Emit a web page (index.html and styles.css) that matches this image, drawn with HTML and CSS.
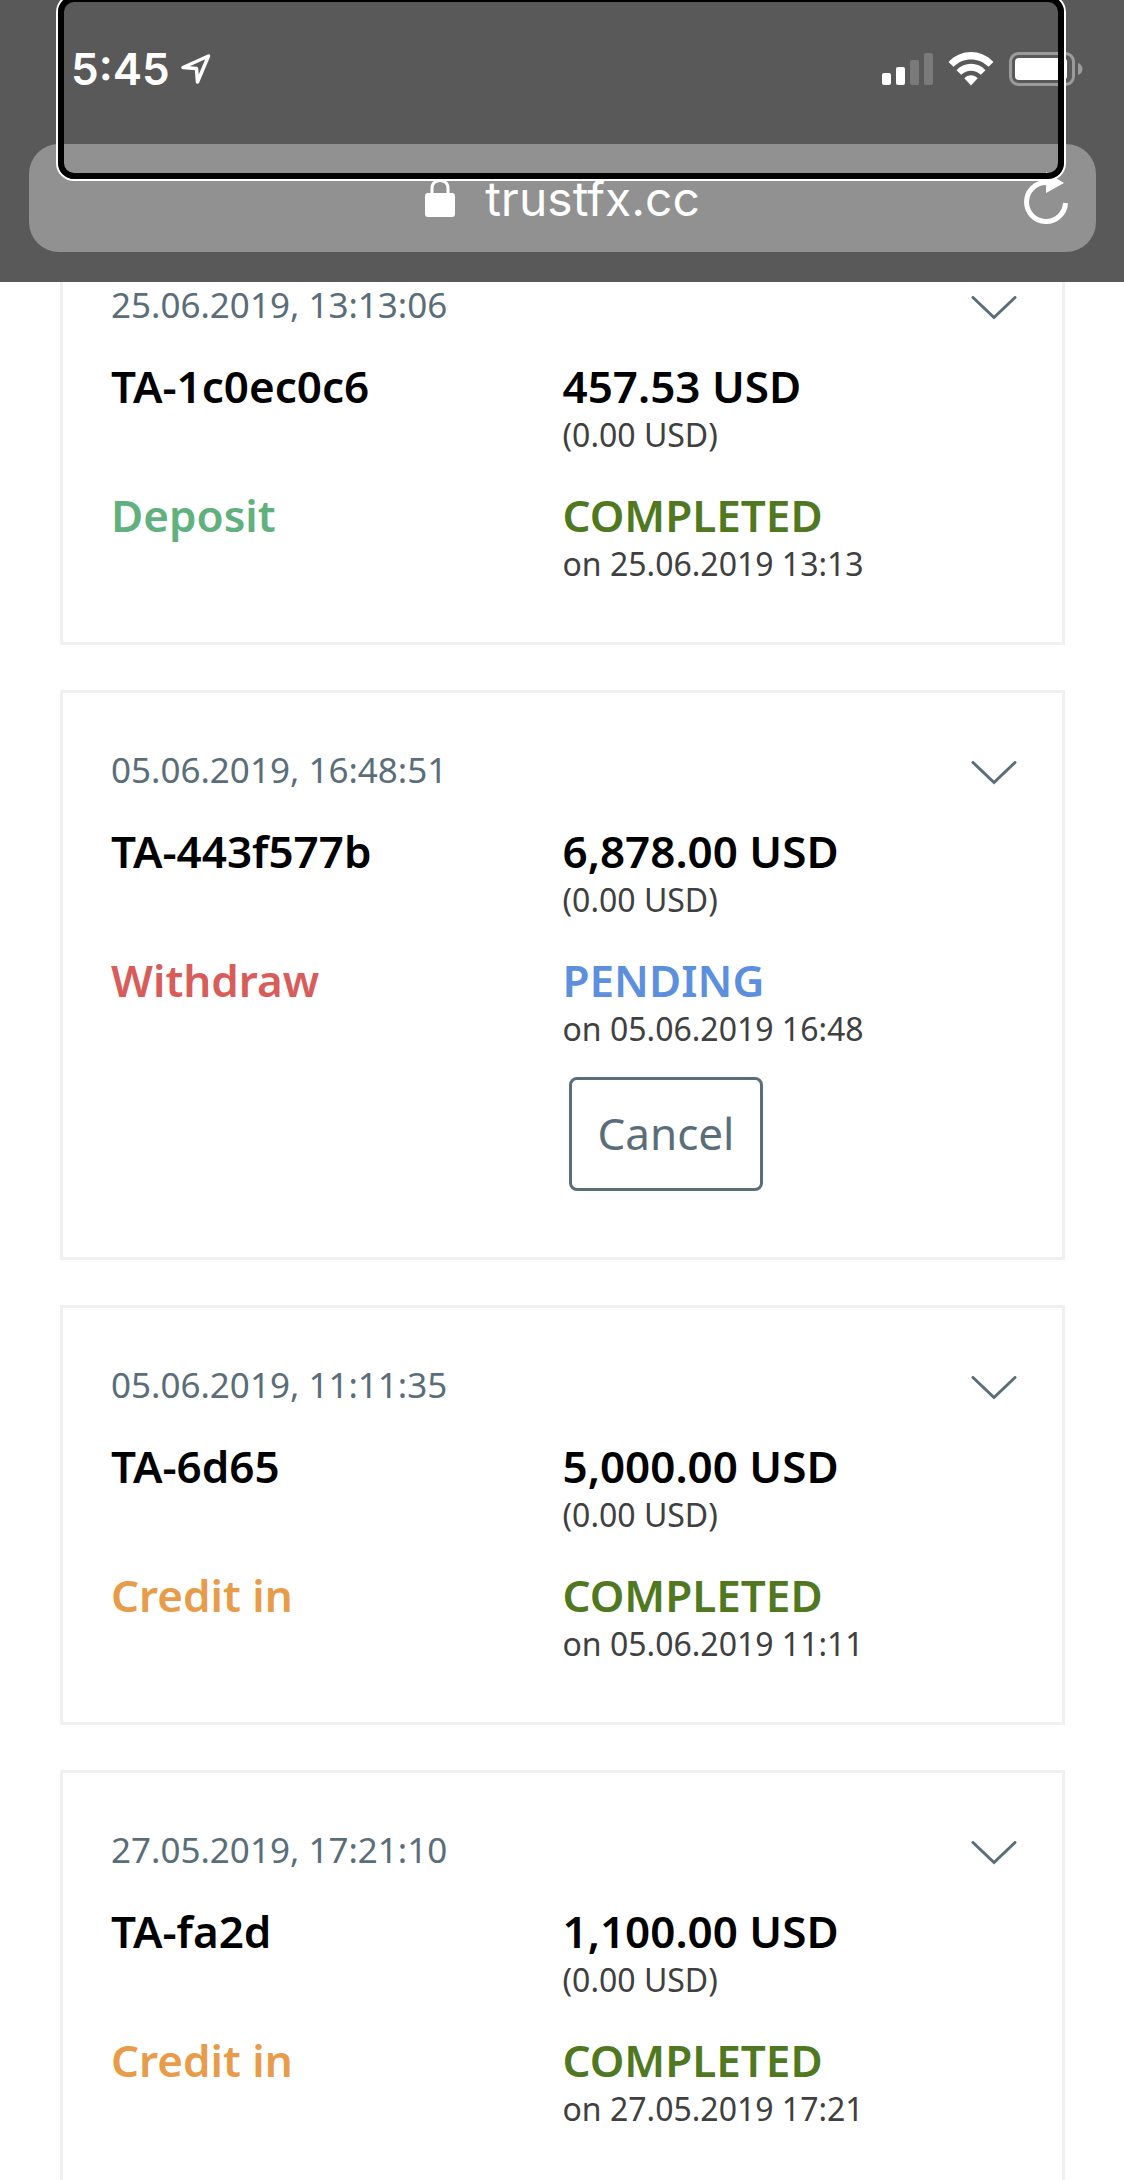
FILE: index.html
```html
<!DOCTYPE html>
<html lang="en">
<head>
  <meta charset="UTF-8">
  <meta name="viewport" content="width=device-width, initial-scale=1">
  <title>trustfx.cc</title>
  <link rel="stylesheet" href="styles.css">
</head>
<body>
  <header class="browser-bar">
    <div class="status-bar">
      <span class="time">5:45</span>
      <svg class="location" width="30" height="30" viewBox="0 0 30 30">
        <path d="M2 13.500 L27.500 2 L16.500 28 L15.500 14.500 Z" fill="none" stroke="#fff" stroke-width="3.500" stroke-linejoin="round"/>
      </svg>
      <div class="status-icons">
        <svg width="51" height="34" viewBox="0 0 51 34" fill="#fff">
          <rect x="0" y="21" width="9" height="12" rx="2"/>
          <rect x="14" y="15" width="9" height="18" rx="2"/>
          <rect x="28" y="8" width="9" height="25" rx="2" opacity=".2"/>
          <rect x="42" y="1" width="9" height="32" rx="2" opacity=".2"/>
        </svg>
        <svg width="46" height="34" viewBox="0 0 46 34" fill="#fff">
          <path d="M0.500 10 C13 -3.300 33 -3.300 45.500 10 L40.500 14.800 C31 5 15 5 5.500 14.800 Z"/>
          <path d="M8.500 18.200 C16.500 9.700 29.500 9.700 37.500 18.200 L32.800 22.800 C27 17.300 19 17.300 13.200 22.800 Z"/>
          <path d="M16.300 26.300 C20 22.300 26 22.300 29.700 26.300 L23 33.500 Z"/>
        </svg>
        <svg width="74" height="34" viewBox="0 0 74 34">
          <rect x="1.500" y="1.500" width="63" height="31" rx="8" fill="none" stroke="#9b9b9b" stroke-width="3"/>
          <rect x="6" y="6" width="52" height="22" rx="4" fill="#fff"/>
          <path d="M69 11 C75 13 75 21 69 23 Z" fill="#9b9b9b"/>
        </svg>
      </div>
    </div>
    <div class="address-bar">
      <a class="address" href="#">
        <svg width="30" height="38" viewBox="0 0 30 38">
          <path d="M7 16 V9 C7 -1 23 -1 23 9 V16" fill="none" stroke="#fff" stroke-width="3"/>
          <rect x="0" y="14" width="30" height="24" rx="3" fill="#fff"/>
        </svg>
        <span>trustfx.cc</span>
      </a>
      <button class="reload" aria-label="Reload">
        <svg width="44" height="52" viewBox="0 0 44 52">
          <path d="M41.500 31 A19.500 19.500 0 1 1 22 10.500" fill="none" stroke="#fff" stroke-width="5"/>
          <path d="M22 0 V21 L40 11 Z" fill="#fff"/>
        </svg>
      </button>
    </div>
  </header>
  <div class="focus-ring"></div>

  <main class="transactions">
    <article class="card">
      <div class="card-head">
        <time>25.06.2019, 13:13:06</time>
        <button class="toggle" aria-label="Details">
          <svg width="46" height="24" viewBox="0 0 46 24"><path d="M2 1.500 L23 21.500 L44 1.500"/></svg>
        </button>
      </div>
      <div class="card-body">
        <div class="strong">TA-1c0ec0c6</div>
        <div>
          <div class="strong">457.53 USD</div>
          <div class="note">(0.00 USD)</div>
        </div>
        <div class="strong deposit">Deposit</div>
        <div>
          <div class="strong completed">COMPLETED</div>
          <div class="note">on 25.06.2019 13:13</div>
        </div>
      </div>
    </article>

    <article class="card">
      <div class="card-head">
        <time>05.06.2019, 16:48:51</time>
        <button class="toggle" aria-label="Details">
          <svg width="46" height="24" viewBox="0 0 46 24"><path d="M2 1.500 L23 21.500 L44 1.500"/></svg>
        </button>
      </div>
      <div class="card-body">
        <div class="strong">TA-443f577b</div>
        <div>
          <div class="strong">6,878.00 USD</div>
          <div class="note">(0.00 USD)</div>
        </div>
        <div class="strong withdraw">Withdraw</div>
        <div>
          <div class="strong pending">PENDING</div>
          <div class="note">on 05.06.2019 16:48</div>
          <button class="cancel">Cancel</button>
        </div>
      </div>
    </article>

    <article class="card">
      <div class="card-head">
        <time>05.06.2019, 11:11:35</time>
        <button class="toggle" aria-label="Details">
          <svg width="46" height="24" viewBox="0 0 46 24"><path d="M2 1.500 L23 21.500 L44 1.500"/></svg>
        </button>
      </div>
      <div class="card-body">
        <div class="strong">TA-6d65</div>
        <div>
          <div class="strong">5,000.00 USD</div>
          <div class="note">(0.00 USD)</div>
        </div>
        <div class="strong credit">Credit in</div>
        <div>
          <div class="strong completed">COMPLETED</div>
          <div class="note">on 05.06.2019 11:11</div>
        </div>
      </div>
    </article>

    <article class="card">
      <div class="card-head">
        <time>27.05.2019, 17:21:10</time>
        <button class="toggle" aria-label="Details">
          <svg width="46" height="24" viewBox="0 0 46 24"><path d="M2 1.500 L23 21.500 L44 1.500"/></svg>
        </button>
      </div>
      <div class="card-body">
        <div class="strong">TA-fa2d</div>
        <div>
          <div class="strong">1,100.00 USD</div>
          <div class="note">(0.00 USD)</div>
        </div>
        <div class="strong credit">Credit in</div>
        <div>
          <div class="strong completed">COMPLETED</div>
          <div class="note">on 27.05.2019 17:21</div>
        </div>
      </div>
    </article>
  </main>
</body>
</html>
```
FILE: styles.css
```css
* {
  box-sizing: border-box;
}

body {
  margin: 0;
  height: 100vh;
  overflow: hidden;
  background-color: #fff;
  font-family: "Noto Sans", sans-serif;
  color: #000;
}

button {
  padding: 0;
  border: none;
  background: none;
  font-family: inherit;
  cursor: pointer;
}

svg {
  display: block;
}

/* browser chrome */
.browser-bar {
  position: fixed;
  top: 0;
  left: 0;
  right: 0;
  z-index: 1;
  padding-bottom: 30px;
  background-color: #595959;
  color: #fff;
  font-family: Inter, sans-serif;
}

.status-bar {
  display: flex;
  align-items: center;
  height: 144px;
  padding: 0 41px 6px 71px;
}

.time {
  font-size: 44px;
  font-weight: 600;
}

.location {
  margin-left: 11px;
}

.status-icons {
  display: flex;
  gap: 15px;
  margin-left: auto;
}

.address-bar {
  display: grid;
  grid-template-columns: 1fr auto 1fr;
  align-items: center;
  height: 108px;
  margin: 0 28px 0 29px;
  padding: 0 28px;
  border-radius: 30px;
  background-color: #919191;
}

.address {
  grid-column: 2;
  display: flex;
  align-items: center;
  gap: 30px;
  color: #fff;
  font-size: 48px;
  text-decoration: none;
}

.reload {
  justify-self: end;
}

.focus-ring {
  position: fixed;
  top: -4px;
  left: 58px;
  right: 60px;
  z-index: 2;
  height: 183px;
  border: 6px solid #000;
  border-radius: 16px;
  box-shadow: 0 0 0 2px #fff;
  pointer-events: none;
}

/* transactions, scrolled partly under the bar */
.transactions {
  padding: 225px 59px 0 60px;
}

.card {
  margin-bottom: 45px;
  padding: 49px 0 58px;
  border: 3px solid #f0f0f1;
}

.card-head {
  display: flex;
  align-items: center;
  justify-content: space-between;
  padding: 0 45px 0 48px;
  color: #5a6e7a;
  font-size: 35px;
  line-height: 56px;
}

.toggle {
  padding-top: 6px;
}

.toggle path {
  fill: none;
  stroke: #5a6e7a;
  stroke-width: 3;
  stroke-linecap: round;
}

.card-body {
  display: grid;
  grid-template-columns: 1fr 1fr;
  row-gap: 31px;
  padding: 24px 48px 0;
}

.strong {
  font-size: 44px;
  font-weight: 600;
  line-height: 58px;
}

.note {
  color: #404040;
  font-size: 32px;
  line-height: 40px;
}

.deposit {
  color: #60b17d;
}

.withdraw {
  color: #d85d5a;
}

.credit {
  color: #e89c49;
}

.completed {
  color: #4f7820;
}

.pending {
  color: #5c8fde;
}

.cancel {
  display: block;
  height: 114px;
  margin: 28px 6px 8px;
  padding: 0 26px 2px;
  border: 3px solid #5a6e7a;
  border-radius: 8px;
  color: #5a6e7a;
  font-size: 44px;
}
```
